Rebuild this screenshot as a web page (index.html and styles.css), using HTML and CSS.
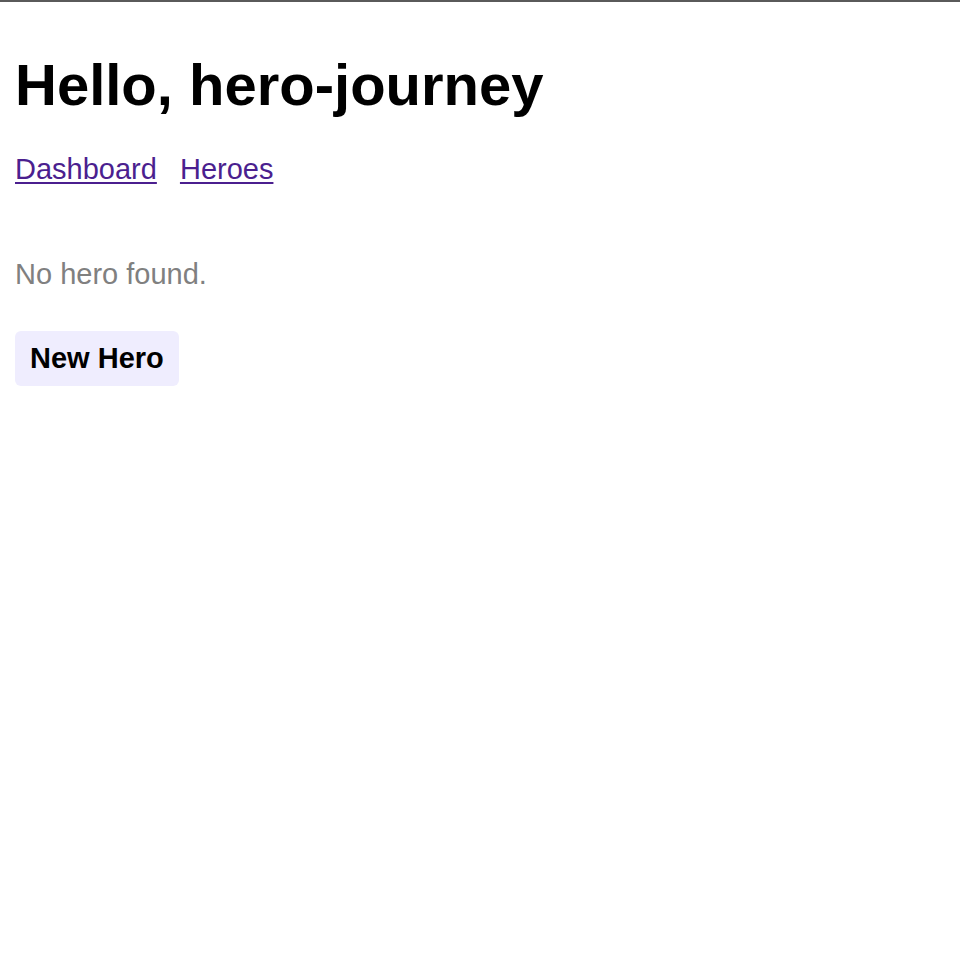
FILE: index.html
```html
<!DOCTYPE html>
<html lang="en">
<head>
  <meta charset="UTF-8" />
  <meta name="viewport" content="width=device-width, initial-scale=1.0"/>
  <title>Hero Journey</title>
  <link rel="stylesheet" href="styles.css">
</head>
<body>

<div class="app">
  <h1>Hello, hero-journey</h1>

  <nav class="main-nav">
    <a href="#dashboard">Dashboard</a>
    <a href="#heroes">Heroes</a>
  </nav>

  <!-- Hero list (empty) -->
  <p class="empty-text">No hero found.</p>

  <button class="new-hero">New Hero</button>
</div>

</body>
</html>
```

FILE: styles.css
```css
body {
  font-family: 'Liberation Sans', Arial, sans-serif;
  font-size: 29px;
  margin: 0;
  padding: 0;
  border-top: 2px solid #5a5a5a;
  background: white;
  color: black;
}

.app {
  padding: 0 15px;
}

h1 {
  font-size: 58px;
  font-weight: bold;
  margin: 49px 0 35px;
}

.main-nav a {
  color: #4b1f8f;
  text-decoration: underline;
  text-underline-offset: 3px;
  margin-right: 15px;
}

.empty-text {
  color: #808080;
  margin: 72px 0 40px;
}

.new-hero {
  font-family: inherit;
  font-size: 29px;
  font-weight: bold;
  background: #efedfe;
  border: none;
  border-radius: 6px;
  padding: 11px 15px;
  color: black;
}
```
